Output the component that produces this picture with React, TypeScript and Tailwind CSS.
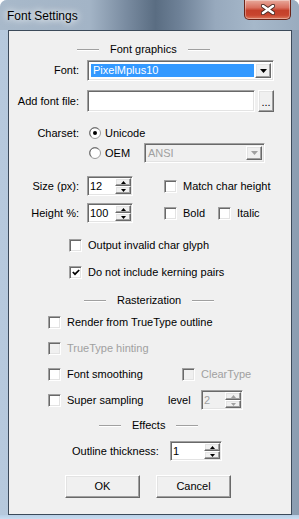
import React from 'react';

const font = "font-['Liberation_Sans',Arial,sans-serif]";
const sunken =
  'border border-t-[#a0a0a0] border-l-[#a0a0a0] border-b-white border-r-white shadow-[inset_1px_1px_0_#696969,inset_-1px_-1px_0_#e3e3e3]';
const raised =
  'border border-t-white border-l-white border-b-[#696969] border-r-[#696969] shadow-[inset_-1px_-1px_0_#a0a0a0,inset_1px_1px_0_#e3e3e3] bg-[#f0f0f0]';

function Header({ label, className = '' }: { label: string; className?: string }) {
  return (
    <div className={`flex items-center h-[13px] gap-[11px] ${className}`}>
      <div className="w-[22px] h-[2px] border-t border-t-[#a0a0a0] border-b border-b-white" />
      <span>{label}</span>
      <div className="w-[22px] h-[2px] border-t border-t-[#a0a0a0] border-b border-b-white" />
    </div>
  );
}

function Checkbox({ checked = false, disabled = false }: { checked?: boolean; disabled?: boolean }) {
  return (
    <div className={`w-[13px] h-[13px] shrink-0 flex items-center justify-center ${sunken} ${disabled ? 'bg-[#f0f0f0]' : 'bg-white'}`}>
      {checked && (
        <svg width="8" height="7" viewBox="0 0 8 7">
          <polyline points="0.8,3 3,5.2 7.2,1" fill="none" stroke="#000" strokeWidth="1.7" />
        </svg>
      )}
    </div>
  );
}

function Radio({ checked = false }: { checked?: boolean }) {
  return (
    <svg width="12" height="12" viewBox="0 0 12 12" className="shrink-0">
      <circle cx="6" cy="6" r="5.5" fill="#fff" stroke="#9a9a9a" />
      <path d="M2.3 9.5 A4.6 4.6 0 0 1 9.5 2.3" fill="none" stroke="#6a6a6a" strokeWidth="1" />
      {checked && <circle cx="6" cy="6" r="2" fill="#000" />}
    </svg>
  );
}

function DownArrow({ color = '#000' }: { color?: string }) {
  return (
    <svg width="7" height="4" viewBox="0 0 7 4">
      <polygon points="0,0 7,0 3.5,4" fill={color} />
    </svg>
  );
}

function Spinner({ value, w, disabled = false }: { value: string; w: string; disabled?: boolean }) {
  const c = disabled ? '#a0a0a0' : '#000';
  return (
    <div className={`h-[20px] ${w} flex shrink-0 ${sunken} ${disabled ? 'bg-[#f0f0f0]' : 'bg-white'}`}>
      <div className={`flex-1 flex items-center pl-[2px] pt-[1px] ${disabled ? 'text-[#a0a0a0]' : ''}`}>{value}</div>
      <div className="w-[16px] flex flex-col m-[1px]">
        <div className={`flex-1 flex items-center justify-center ${raised}`}>
          <svg width="5" height="3" viewBox="0 0 5 3">
            <polygon points="0,3 2.5,0 5,3" fill={c} />
          </svg>
        </div>
        <div className={`flex-1 flex items-center justify-center ${raised}`}>
          <svg width="5" height="3" viewBox="0 0 5 3">
            <polygon points="0,0 5,0 2.5,3" fill={c} />
          </svg>
        </div>
      </div>
    </div>
  );
}

function CloseButton() {
  return (
    <div className="mr-[8px] w-[47px] h-[20px] rounded-b-[5px] border border-t-0 border-[#6b2418] bg-[linear-gradient(180deg,#e8aa9c_0%,#d9705f_40%,#c4402a_55%,#c8452e_80%,#dc7a5e_100%)] shadow-[inset_0_0_0_1px_rgba(255,255,255,0.35)] flex items-center justify-center">
      <svg width="14" height="11" viewBox="0 0 14 11">
        <path d="M2 2 L12 9 M12 2 L2 9" stroke="#4a2a24" strokeWidth="4.4" strokeLinecap="round" />
        <path d="M2 2 L12 9 M12 2 L2 9" stroke="#fff" strokeWidth="2.6" strokeLinecap="round" />
      </svg>
    </div>
  );
}

export default function App() {
  return (
    <div className="w-[299px] h-[519px] bg-white">
      <div className={`w-[299px] h-[519px] rounded-t-[7px] overflow-hidden flex flex-col bg-[linear-gradient(90deg,#b6c9dd_0%,#aec1d5_50%,#8b9db1_100%)] ${font}`}>
        {/* title bar */}
        <div className="h-[30px] flex items-start justify-between shrink-0 bg-[linear-gradient(90deg,#a8b9ca_0%,#a3b4c6_30%,#7a8ca1_42%,#5a6d82_52%,#6e8197_60%,#97a9bd_72%,#a6b8ca_85%,#9aacbf_100%)]">
          <span className="ml-[7px] mt-[9px] text-[12px] leading-[14px] text-black [text-shadow:0_0_6px_#fff,0_0_10px_#fff]">Font Settings</span>
          <CloseButton />
        </div>

        {/* client area */}
        <div className="ml-[8px] w-[284px] h-[485px] shrink-0 border border-[#3c4a5a] bg-[#f0f0f0] flex flex-col text-[11px] leading-[13px] text-black">
          <Header label="Font graphics" className="mt-[12px] ml-[68px]" />

          <div className="mt-[4px] h-[21px] flex items-center">
            <span className="w-[70px] text-right">Font:</span>
            <div className={`ml-[8px] w-[187px] h-[21px] flex bg-white p-[2px] ${sunken}`}>
              <div className="flex-1 m-[1px] bg-[#3399ff] text-white flex items-center pl-[2px]">PixelMplus10</div>
              <div className={`w-[16px] flex items-center justify-center ${raised}`}>
                <DownArrow />
              </div>
            </div>
          </div>

          <div className="mt-[9px] h-[22px] flex items-center">
            <span className="w-[70px] text-right">Add font file:</span>
            <div className={`ml-[8px] w-[168px] h-[22px] bg-white ${sunken}`} />
            <div className={`ml-[3px] w-[16px] h-[22px] flex items-center justify-center pt-[2px] ${raised}`}>...</div>
          </div>

          <div className="mt-[13px] h-[16px] flex items-center">
            <span className="w-[70px] text-right">Charset:</span>
            <div className="ml-[10px]">
              <Radio checked />
            </div>
            <span className="ml-[4px]">Unicode</span>
          </div>

          <div className="mt-[2px] h-[20px] flex items-center">
            <div className="ml-[80px]">
              <Radio />
            </div>
            <span className="ml-[4px] w-[39px]">OEM</span>
            <div className={`w-[121px] h-[20px] flex bg-[#f0f0f0] p-[2px] ${sunken}`}>
              <div className="flex-1 flex items-center pl-[1px] text-[#a0a0a0]">ANSI</div>
              <div className={`w-[16px] flex items-center justify-center ${raised}`}>
                <DownArrow color="#a0a0a0" />
              </div>
            </div>
          </div>

          <div className="mt-[13px] h-[20px] flex items-center">
            <span className="w-[70px] text-right">Size (px):</span>
            <div className="ml-[8px]">
              <Spinner value="12" w="w-[46px]" />
            </div>
            <div className="ml-[31px]">
              <Checkbox />
            </div>
            <span className="ml-[6px]">Match char height</span>
          </div>

          <div className="mt-[7px] h-[20px] flex items-center">
            <span className="w-[70px] text-right">Height %:</span>
            <div className="ml-[8px]">
              <Spinner value="100" w="w-[46px]" />
            </div>
            <div className="ml-[31px]">
              <Checkbox />
            </div>
            <span className="ml-[6px] w-[35px]">Bold</span>
            <Checkbox />
            <span className="ml-[6px]">Italic</span>
          </div>

          <div className="mt-[16px] h-[13px] flex items-center">
            <div className="ml-[60px]">
              <Checkbox />
            </div>
            <span className="ml-[6px]">Output invalid char glyph</span>
          </div>

          <div className="mt-[14px] h-[13px] flex items-center">
            <div className="ml-[60px]">
              <Checkbox checked />
            </div>
            <span className="ml-[6px]">Do not include kerning pairs</span>
          </div>

          <Header label="Rasterization" className="mt-[15px] ml-[75px]" />

          <div className="mt-[9px] h-[13px] flex items-center">
            <div className="ml-[39px]">
              <Checkbox />
            </div>
            <span className="ml-[6px]">Render from TrueType outline</span>
          </div>

          <div className="mt-[13px] h-[13px] flex items-center">
            <div className="ml-[39px]">
              <Checkbox disabled />
            </div>
            <span className="ml-[6px] text-[#a0a0a0]">TrueType hinting</span>
          </div>

          <div className="mt-[13px] h-[13px] flex items-center">
            <div className="ml-[39px]">
              <Checkbox />
            </div>
            <span className="ml-[6px] w-[115px]">Font smoothing</span>
            <Checkbox disabled />
            <span className="ml-[6px] text-[#a0a0a0]">ClearType</span>
          </div>

          <div className="mt-[9px] h-[20px] flex items-center">
            <div className="ml-[39px]">
              <Checkbox />
            </div>
            <span className="ml-[6px] w-[101px]">Super sampling</span>
            <span className="w-[33px]">level</span>
            <Spinner value="2" w="w-[42px]" disabled />
          </div>

          <Header label="Effects" className="mt-[9px] ml-[90px]" />

          <div className="mt-[9px] h-[20px] flex items-center">
            <span className="ml-[63px] w-[98px]">Outline thickness:</span>
            <Spinner value="1" w="w-[52px]" />
          </div>

          <div className="mt-[14px] h-[23px] flex items-center">
            <button className={`ml-[56px] w-[75px] h-[23px] flex items-center justify-center text-[11px] ${raised}`}>OK</button>
            <button className={`ml-[16px] w-[75px] h-[23px] flex items-center justify-center text-[11px] ${raised}`}>Cancel</button>
          </div>
        </div>
        <div className="flex-1 bg-[linear-gradient(180deg,#b9cfe6,#c9ddf1)]" />
      </div>
    </div>
  );
}
